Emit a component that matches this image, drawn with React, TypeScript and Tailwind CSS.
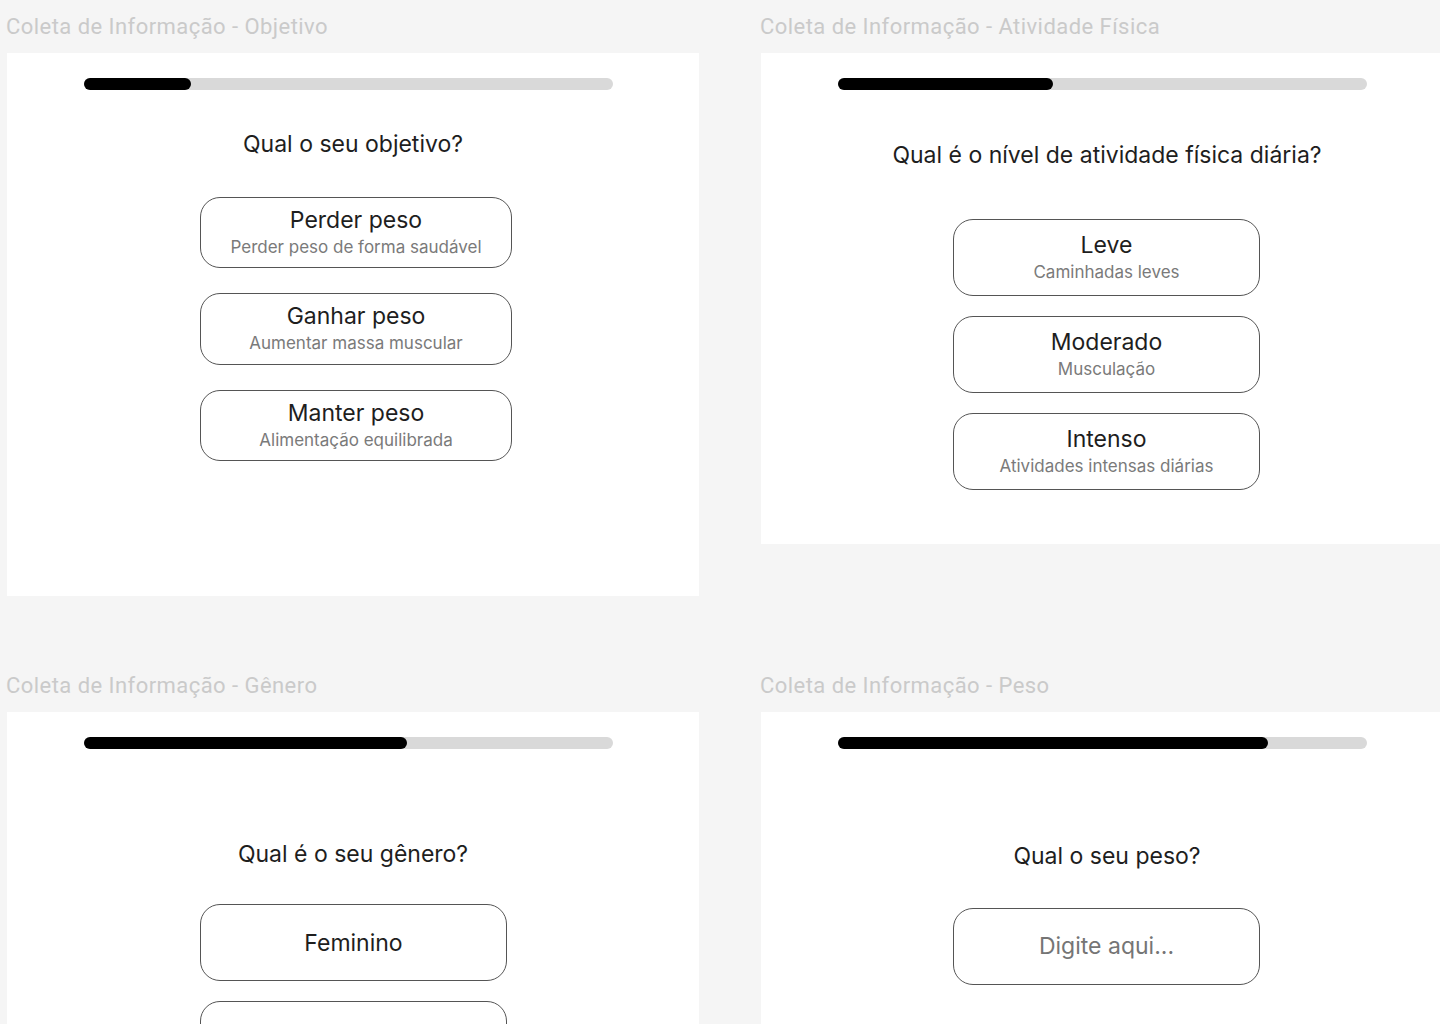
import React from "react";

const font = { fontFamily: "Inter, 'Noto Sans', sans-serif" };

function Bar({ fill }: { fill: string }) {
  return (
    <div className="ml-[77px] mt-[25px] h-[12px] w-[529px] rounded-full bg-[#d9d9d9]">
      <div className={`h-full rounded-full bg-black ${fill}`} />
    </div>
  );
}

function Label({ text }: { text: string }) {
  return (
    <div
      className="h-[53px] pt-[13px] -ml-[1px] text-[22px] leading-[28px] tracking-[0.45px] text-[#cacaca]"
      style={{ fontFamily: "Roboto, 'Liberation Sans', sans-serif" }}
    >
      {text}
    </div>
  );
}

function Option({
  title,
  sub,
  h,
}: {
  title?: string;
  sub?: string;
  h: string;
}) {
  return (
    <div
      className={`flex flex-col items-center justify-center rounded-[20px] border border-[#555555] bg-white ${h}`}
    >
      {title && (
        <div className="text-[23px] leading-[28px] text-[#1e1e1e]">{title}</div>
      )}
      {sub && (
        <div className="text-[17px] leading-[26px] text-[#7a7a7a]">{sub}</div>
      )}
    </div>
  );
}

export default function App() {
  return (
    <div
      className="h-[1024px] w-[1440px] overflow-hidden bg-[#f5f5f5]"
      style={font}
    >
      <div className="flex gap-[62px] pl-[7px] items-start">
        {/* Frame 1 */}
        <div className="w-[692px] shrink-0">
          <Label text="Coleta de Informação - Objetivo" />
          <div className="h-[543px] bg-white flex flex-col">
            <Bar fill="w-[107px]" />
            <div className="mt-[40px] text-center text-[23px] leading-[28px] text-[#1e1e1e]">
              Qual o seu objetivo?
            </div>
            <div className="ml-[193px] mt-[39px] flex w-[312px] flex-col gap-[25px]">
              <Option title="Perder peso" sub="Perder peso de forma saudável" h="h-[71px]" />
              <Option title="Ganhar peso" sub="Aumentar massa muscular" h="h-[72px]" />
              <Option title="Manter peso" sub="Alimentação equilibrada" h="h-[71px]" />
            </div>
          </div>
        </div>
        {/* Frame 2 */}
        <div className="w-[692px] shrink-0">
          <Label text="Coleta de Informação - Atividade Física" />
          <div className="h-[491px] bg-white flex flex-col">
            <Bar fill="w-[215px]" />
            <div className="mt-[51px] text-center text-[23px] leading-[28px] text-[#1e1e1e]">
              Qual é o nível de atividade física diária?
            </div>
            <div className="ml-[192px] mt-[50px] flex w-[307px] flex-col gap-[20px]">
              <Option title="Leve" sub="Caminhadas leves" h="h-[77px]" />
              <Option title="Moderado" sub="Musculação" h="h-[77px]" />
              <Option title="Intenso" sub="Atividades intensas diárias" h="h-[77px]" />
            </div>
          </div>
        </div>
      </div>

      <div className="mt-[63px] flex gap-[62px] pl-[7px] items-start">
        {/* Frame 3 */}
        <div className="w-[692px] shrink-0">
          <Label text="Coleta de Informação - Gênero" />
          <div className="h-[543px] bg-white flex flex-col">
            <Bar fill="w-[323px]" />
            <div className="mt-[91px] text-center text-[23px] leading-[28px] text-[#1e1e1e]">
              Qual é o seu gênero?
            </div>
            <div className="ml-[193px] mt-[36px] flex w-[307px] flex-col gap-[20px]">
              <Option title="Feminino" h="h-[77px]" />
              <Option h="h-[77px]" />
            </div>
          </div>
        </div>
        {/* Frame 4 */}
        <div className="w-[692px] shrink-0">
          <Label text="Coleta de Informação - Peso" />
          <div className="h-[543px] bg-white flex flex-col">
            <Bar fill="w-[430px]" />
            <div className="mt-[93px] text-center text-[23px] leading-[28px] text-[#1e1e1e]">
              Qual o seu peso?
            </div>
            <div className="ml-[192px] mt-[38px] w-[307px]">
              <div className="flex h-[77px] items-center justify-center rounded-[20px] border border-[#555555] bg-white text-[23px] text-[#757575]">
                Digite aqui...
              </div>
            </div>
          </div>
        </div>
      </div>
    </div>
  );
}
